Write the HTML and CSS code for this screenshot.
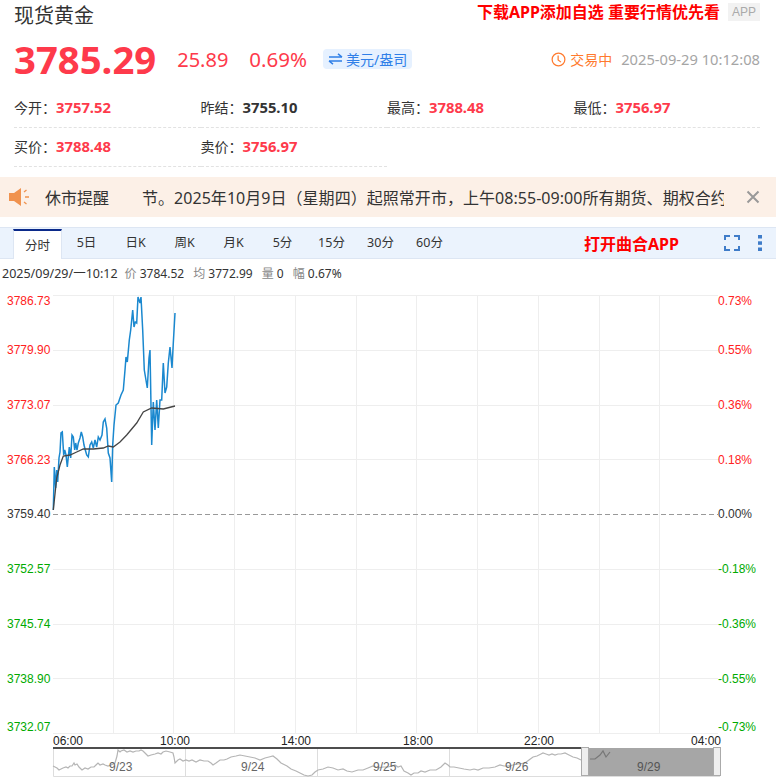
FILE: index.html
```html
<!DOCTYPE html>
<html lang="zh-CN">
<head>
    <meta charset="UTF-8">
    <title>现货黄金</title>
    <link rel="stylesheet" href="styles.css">
</head>
<body>
    <div class="top-row">
        <h1 class="title">现货黄金</h1>
        <div class="promo">
            <span class="promo-text">下载APP添加自选 重要行情优先看</span>
            <span class="app-tag">APP</span>
        </div>
    </div>

    <div class="quote-row">
        <span class="price">3785.29</span>
        <span class="change">25.89</span>
        <span class="change pct">0.69%</span>
        <span class="unit">
            <svg class="unit-icon" viewBox="0 0 15 12" width="15" height="12">
                <path d="M1 4h13M10 .8 14 4M14 8H1M5 11.2 1 8" fill="none" stroke="#2f7fe8" stroke-width="1.500"/>
            </svg>
            美元/盎司
        </span>
        <span class="status">
            <svg viewBox="0 0 16 16" width="15" height="15">
                <circle cx="8" cy="8" r="6.8" fill="none" stroke="#ff7a2e" stroke-width="1.3"/>
                <path d="M7.6 3.8V8.4L10.6 10.8" fill="none" stroke="#ff7a2e" stroke-width="1.3"/>
            </svg>
            <span class="status-text">交易中</span>
            <span class="time">2025-09-29 10:12:08</span>
        </span>
    </div>

    <div class="stats">
        <div class="stat">今开：<b class="up">3757.52</b></div>
        <div class="stat">昨结：<b>3755.10</b></div>
        <div class="stat">最高：<b class="up">3788.48</b></div>
        <div class="stat">最低：<b class="up">3756.97</b></div>
        <div class="stat">买价：<b class="up">3788.48</b></div>
        <div class="stat">卖价：<b class="up">3756.97</b></div>
    </div>

    <div class="notice">
        <svg class="notice-icon" viewBox="0 0 22 22" width="22" height="22">
            <path d="M1 7h5l7-5v18l-7-5H1z" fill="#f0924e"/>
            <path d="M16 6l2.500-2M17 11h4M16 16l2.500 2" stroke="#f0924e" stroke-width="1.300" fill="none"/>
        </svg>
        <span class="notice-label">休市提醒</span>
        <div class="notice-clip">
            <span class="notice-text">节。2025年10月9日（星期四）起照常开市，上午08:55-09:00所有期货、期权合约</span>
        </div>
        <svg class="notice-close" viewBox="0 0 14 14" width="14" height="14">
            <path d="M1.500 1.500l11 11M12.500 1.500l-11 11" stroke="#999" stroke-width="2"/>
        </svg>
    </div>

    <div class="tabs">
        <span class="tab active">分时</span>
        <span class="tab">5日</span>
        <span class="tab">日K</span>
        <span class="tab">周K</span>
        <span class="tab">月K</span>
        <span class="tab">5分</span>
        <span class="tab">15分</span>
        <span class="tab">30分</span>
        <span class="tab">60分</span>
        <span class="open-app">打开曲合APP</span>
        <svg class="tab-icon" viewBox="0 0 16 16" width="16" height="16">
            <path d="M1 5V1h5M10 1h5v4M15 11v4h-5M6 15H1v-4" fill="none" stroke="#3f7cc9" stroke-width="2"/>
        </svg>
        <svg class="tab-icon more" viewBox="0 0 4 16" width="4" height="16">
            <rect x="0" y="0" width="4" height="3.500" fill="#3f7cc9"/>
            <rect x="0" y="6.300" width="4" height="3.500" fill="#3f7cc9"/>
            <rect x="0" y="12.500" width="4" height="3.500" fill="#3f7cc9"/>
        </svg>
    </div>

    <div class="info-row">
        <span class="info-date">2025/09/29/一10:12</span>
        <span><i>价</i> 3784.52</span>
        <span><i>均</i> 3772.99</span>
        <span><i>量</i> 0</span>
        <span><i>幅</i> 0.67%</span>
    </div>

    <svg class="chart" viewBox="0 295 776 483" width="776" height="483">
        <g class="grid">
            <path d="M53 295.500H718M53 350.500H718M53 405.500H718M53 459.500H718M53 569.500H718M53 624.500H718M53 678.500H718M53 733.500H718"/>
            <path d="M113.500 295V733M173.500 295V733M234.500 295V733M295.500 295V733M356.500 295V733M416.500 295V733M477.500 295V733M538.500 295V733M599.500 295V733M659.500 295V733"/>
        </g>
        <path class="zero-line" d="M53 514.500H718"/>

        <g class="axis up-axis">
            <text x="7" y="305">3786.73</text>
            <text x="7" y="354">3779.90</text>
            <text x="7" y="409">3773.07</text>
            <text x="7" y="464">3766.23</text>
            <text x="718" y="305">0.73%</text>
            <text x="718" y="354">0.55%</text>
            <text x="718" y="409">0.36%</text>
            <text x="718" y="464">0.18%</text>
        </g>
        <g class="axis flat-axis">
            <text x="7" y="518">3759.40</text>
            <text x="718" y="518">0.00%</text>
        </g>
        <g class="axis down-axis">
            <text x="7" y="573">3752.57</text>
            <text x="7" y="628">3745.74</text>
            <text x="7" y="683">3738.90</text>
            <text x="7" y="731">3732.07</text>
            <text x="718" y="573">-0.18%</text>
            <text x="718" y="628">-0.36%</text>
            <text x="718" y="683">-0.55%</text>
            <text x="718" y="731">-0.73%</text>
        </g>

        <polyline class="price-line" points="53.300,510 54.300,467 55.700,488 56.700,470 57.700,482 59,458 60,452 61,433 62.300,432 63.700,455 64.700,450 66,455 67.300,467 69.300,447 70.700,458 72,435 73.300,437 74.700,450 75.700,443 77,450 78.300,443 80,438 81.300,432 82.700,437 84,445 85.300,450 86.700,455 88.300,457 90,445 91.700,442 93.300,448 95,440 96.700,447 98.300,437 100,440 102,435 103.300,422 105,419 106.700,428 108.300,453 110,458 111.700,482 112.700,445 114,425 116,405 118.300,403 119.300,400 121,395 123.300,390 125,370 126,357 127.300,362 129.300,340 130.700,330 132.700,310 134,327 135.300,322 136.700,323 138,297 140,303 141,297 142.700,330 144.300,370 147.300,388 149,358 150,350 151.700,445 153.300,402 155,430 156.700,400 158.300,428 160,400 161.700,400 163.300,363 165,393 166.700,387 168.300,363 170,347 172,368 173.300,343 175,313"/>
        <polyline class="avg-line" points="53.300,510 56.700,478 60,465 63.300,456 70,455 76.700,452 83.300,449 93.300,449 103.300,448 108.300,446 113.300,447 120,442 126.700,435 136.700,423 143.300,412 151.700,408 163.300,409 175,406"/>

        <g class="axis time-axis">
            <text x="53" y="745">06:00</text>
            <text x="175" y="745" text-anchor="middle">10:00</text>
            <text x="296" y="745" text-anchor="middle">14:00</text>
            <text x="418" y="745" text-anchor="middle">18:00</text>
            <text x="539" y="745" text-anchor="middle">22:00</text>
            <text x="721" y="745" text-anchor="end">04:00</text>
        </g>

        <path class="mini-border" d="M53.500 748V776.500H720M185.500 748V776M317.500 748V776M449.500 748V776"/>
        <path class="mini-top" d="M53 748H582"/>
        <polyline class="mini-line" points="53,766 55,767 57,768 59,770 61,769 63,768 66,767 68,768 70,766 72,766 74,763 75,765 77,764 79,767 81,769 82,770 85,768 88,769 91,767 94,767 96,765 98,763 100,765 103,764 105,765 108,766 111,765 113,764 115,763 117,756 118,750 120,752 121,751 124,750 127,752 130,751 133,752 136,751 139,751 141,750 143,751 145,753 148,756 151,755 155,754 158,753 161,754 163,752 166,751 170,752 173,753 174,757 175,763 178,760 180,759 183,761 186,760 189,761 192,760 196,762 200,760 204,761 208,761 211,763 213,765 216,763 220,760 224,760 227,759 231,757 236,756 240,755 245,756 250,757 255,758 260,760 265,758 269,757 273,756 277,759 281,763 287,766 291,769 296,771 300,773 304,775 308,776 312,775 315,772 318,770 323,769 328,767 333,768 338,770 343,769 347,771 352,772 358,770 363,770 368,768 373,766 378,768 383,767 388,767 392,766 395,765 398,767 401,766 404,771 408,773 411,775 414,773 418,773 421,771 425,772 430,770 436,770 441,767 445,763 448,765 450,767 454,767 459,768 464,769 470,770 474,769 478,770 483,768 489,768 495,767 500,765 504,766 508,766 513,765 518,764 525,763 529,760 533,757 537,756 541,754 543,753 546,754 549,755 552,754 555,755 558,754 561,754 565,753 569,755 573,757 577,758 581,760"/>
        <g class="axis mini-date">
            <text x="109" y="771">9/23</text>
            <text x="241" y="771">9/24</text>
            <text x="373" y="771">9/25</text>
            <text x="505" y="771">9/26</text>
        </g>
        <rect class="mini-shade" x="588" y="748" width="126" height="28"/>
        <polyline class="mini-line on-shade" points="590,759 595,759 600,755 603,751 606,757 610,752"/>
        <text class="axis mini-active" x="637" y="771">9/29</text>
        <rect class="mini-handle" x="581.500" y="747.500" width="7" height="28"/>
        <rect class="mini-handle" x="713.500" y="747.500" width="7" height="28"/>
    </svg>
</body>
</html>
```

FILE: styles.css
```css
body {
    margin: 0;
    width: 776px;
    height: 778px;
    overflow: hidden;
    background: #fff;
    color: #333;
    font-family: "Noto Sans", "Noto Sans CJK SC", sans-serif;
}

/* Top */
.top-row {
    display: flex;
    justify-content: space-between;
    height: 30px;
    padding: 0 16px 0 14px;
}

.title {
    margin: 0;
    font-size: 20px;
    font-weight: 400;
    line-height: 31px;
}

.promo {
    display: flex;
    align-items: flex-start;
    gap: 8px;
}

.promo-text {
    color: #f00;
    font-size: 16px;
    font-weight: 700;
    line-height: 24px;
}

.app-tag {
    margin-top: 3px;
    width: 32px;
    height: 18px;
    background: #f2f2f2;
    color: #aaa;
    font-family: "Liberation Sans", sans-serif;
    font-size: 12px;
    line-height: 18px;
    text-align: center;
}

.quote-row {
    display: flex;
    align-items: center;
    height: 58px;
    padding: 0 16px 0 14px;
}

.price {
    color: #fe3a4b;
    font-size: 38.300px;
    font-weight: 700;
    margin-right: 21px;
}

.change {
    color: #fe3a4b;
    font-size: 20px;
    margin-right: 21px;
}

.change.pct {
    font-size: 20.500px;
    margin-right: 16px;
}

.unit {
    display: flex;
    align-items: center;
    gap: 3px;
    height: 20px;
    padding: 0 5px;
    background: #e6f1ff;
    border-radius: 4px;
    color: #2f7fe8;
    font-size: 14px;
}

.status {
    display: flex;
    align-items: center;
    margin-left: auto;
    font-size: 14px;
}

.status-text {
    color: #ff7a2e;
    margin: 0 9px 0 4px;
}

.time {
    color: #a5a5a5;
    font-size: 14.700px;
}

/* Stats */
.stats {
    display: grid;
    grid-template-columns: repeat(4, 186.500px);
    margin: 1px 0 0 14px;
}

.stat {
    height: 38px;
    border-bottom: 1px dashed #e2e2e2;
    font-size: 14px;
    line-height: 37px;
}

.stat b {
    font-size: 14.800px;
    font-weight: 700;
}

.up {
    color: #fe3a4b;
}

/* Notice */
.notice {
    display: flex;
    align-items: center;
    height: 40px;
    margin-top: 10px;
    background: #fcf0e7;
}

.notice-icon {
    margin-left: 8px;
}

.notice-label {
    margin-left: 15px;
    width: 84px;
    font-size: 16px;
}

.notice-clip {
    width: 594px;
    margin-left: 1px;
    padding-left: 12px;
    box-sizing: border-box;
    overflow: hidden;
    white-space: nowrap;
    font-size: 16px;
    letter-spacing: 0.040px;
}

.notice-close {
    margin-left: 22px;
}

/* Tabs */
.tabs {
    display: flex;
    align-items: center;
    height: 30px;
    margin-top: 10px;
    padding-left: 13px;
    background: #ebf3fd;
    border-top: 1px solid #dde6f3;
    border-bottom: 1px solid #dde6f3;
}

.tab {
    width: 49px;
    font-size: 12.500px;
    line-height: 32px;
    text-align: center;
}

.tab.active {
    height: 30px;
    line-height: 29px;
    margin-top: 1px;
    background: #fff;
    box-sizing: border-box;
    border-top: 2px solid #0b2a8a;
    border-left: 1px solid #dde6f3;
    border-right: 1px solid #dde6f3;
}

.open-app {
    margin-left: 130px;
    color: #f00;
    font-size: 16px;
    font-weight: 700;
}

.tab-icon {
    margin-left: 45px;
}

.tab-icon.more {
    margin-left: 18px;
}

.info-row {
    display: flex;
    gap: 9px;
    height: 27px;
    margin-bottom: 9px;
    padding-left: 2px;
    align-items: center;
    font-size: 12px;
}

.info-date {
    font-size: 12.500px;
    margin-right: -2px;
}

.info-row i {
    color: #888;
    font-style: normal;
}

/* Chart */
.chart {
    display: block;
}

.grid path {
    fill: none;
    stroke: #eee;
}

.zero-line {
    stroke: #999;
    stroke-dasharray: 5 3;
}

.axis {
    font-family: "Liberation Sans", sans-serif;
    font-size: 12px;
}

.up-axis {
    fill: #f22;
}

.flat-axis {
    fill: #333;
}

.down-axis {
    fill: #0a0;
}

.time-axis {
    fill: #222;
}

.price-line {
    fill: none;
    stroke: #1a88cf;
    stroke-width: 1.500;
}

.avg-line {
    fill: none;
    stroke: #444;
    stroke-width: 1.300;
}

.mini-border {
    fill: none;
    stroke: #ddd;
}

.mini-top {
    stroke: #4d4d4d;
    stroke-width: 2;
}

.mini-line {
    fill: none;
    stroke: #b5b5b5;
    stroke-width: 1.200;
}

.mini-line.on-shade {
    stroke: #777;
}

.mini-date {
    fill: #666;
}

.mini-shade {
    fill: #a6a6a6;
}

.mini-active {
    fill: #555;
}

.mini-handle {
    fill: #eee;
    stroke: #aaa;
}
```
